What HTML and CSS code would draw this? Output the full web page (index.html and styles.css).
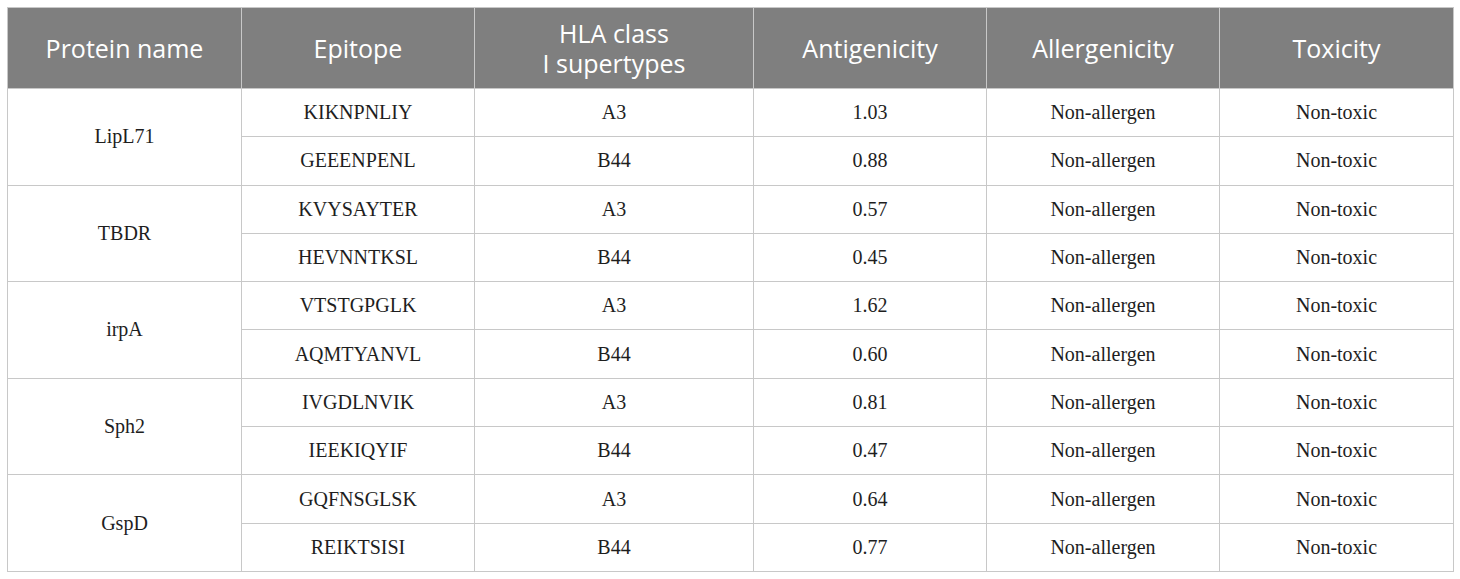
FILE: index.html
```html
<!DOCTYPE html>
<html>
<head>
<meta charset="utf-8">
<link rel="stylesheet" href="styles.css">
</head>
<body>
<table class="data">
  <colgroup>
    <col class="c1"><col class="c2"><col class="c3"><col class="c4"><col class="c5"><col class="c6">
  </colgroup>
  <thead>
    <tr>
      <th>Protein name</th>
      <th>Epitope</th>
      <th>HLA class<br>I supertypes</th>
      <th>Antigenicity</th>
      <th>Allergenicity</th>
      <th>Toxicity</th>
    </tr>
  </thead>
  <tbody>
    <tr><td rowspan="2">LipL71</td><td>KIKNPNLIY</td><td>A3</td><td>1.03</td><td>Non-allergen</td><td>Non-toxic</td></tr>
    <tr><td>GEEENPENL</td><td>B44</td><td>0.88</td><td>Non-allergen</td><td>Non-toxic</td></tr>
    <tr><td rowspan="2">TBDR</td><td>KVYSAYTER</td><td>A3</td><td>0.57</td><td>Non-allergen</td><td>Non-toxic</td></tr>
    <tr><td>HEVNNTKSL</td><td>B44</td><td>0.45</td><td>Non-allergen</td><td>Non-toxic</td></tr>
    <tr><td rowspan="2">irpA</td><td>VTSTGPGLK</td><td>A3</td><td>1.62</td><td>Non-allergen</td><td>Non-toxic</td></tr>
    <tr><td>AQMTYANVL</td><td>B44</td><td>0.60</td><td>Non-allergen</td><td>Non-toxic</td></tr>
    <tr><td rowspan="2">Sph2</td><td>IVGDLNVIK</td><td>A3</td><td>0.81</td><td>Non-allergen</td><td>Non-toxic</td></tr>
    <tr><td>IEEKIQYIF</td><td>B44</td><td>0.47</td><td>Non-allergen</td><td>Non-toxic</td></tr>
    <tr><td rowspan="2">GspD</td><td>GQFNSGLSK</td><td>A3</td><td>0.64</td><td>Non-allergen</td><td>Non-toxic</td></tr>
    <tr><td>REIKTSISI</td><td>B44</td><td>0.77</td><td>Non-allergen</td><td>Non-toxic</td></tr>
  </tbody>
</table>
</body>
</html>
```
FILE: styles.css
```css
html, body {
  margin: 0;
  padding: 0;
  background: #ffffff;
}
body {
  padding: 7px;
}
.data {
  width: 1446px;
  border-collapse: collapse;
  table-layout: fixed;
  border: 1px solid #c8c8c8;
}
.c1 { width: 234px; }
.c2 { width: 233px; }
.c3 { width: 279px; }
.c4 { width: 233px; }
.c5 { width: 233px; }
.c6 { width: 234px; }
.data th {
  background: #7f7f7f;
  color: #ffffff;
  font-family: "Open Sans", "Noto Sans", sans-serif;
  font-weight: 400;
  font-size: 25px;
  line-height: 30px;
  height: 81px;
  padding: 0 4px;
  text-align: center;
  vertical-align: middle;
  border: 1px solid #c8c8c8;
  border-top: none;
  box-sizing: border-box;
}
.data thead tr { height: 81px; }
.data td {
  font-family: "Liberation Serif", "Times New Roman", serif;
  font-size: 20px;
  color: #1e1e1e;
  text-align: center;
  vertical-align: middle;
  height: 48.3px;
  padding: 0 4px;
  border: 1px solid #c8c8c8;
  box-sizing: border-box;
}
```
